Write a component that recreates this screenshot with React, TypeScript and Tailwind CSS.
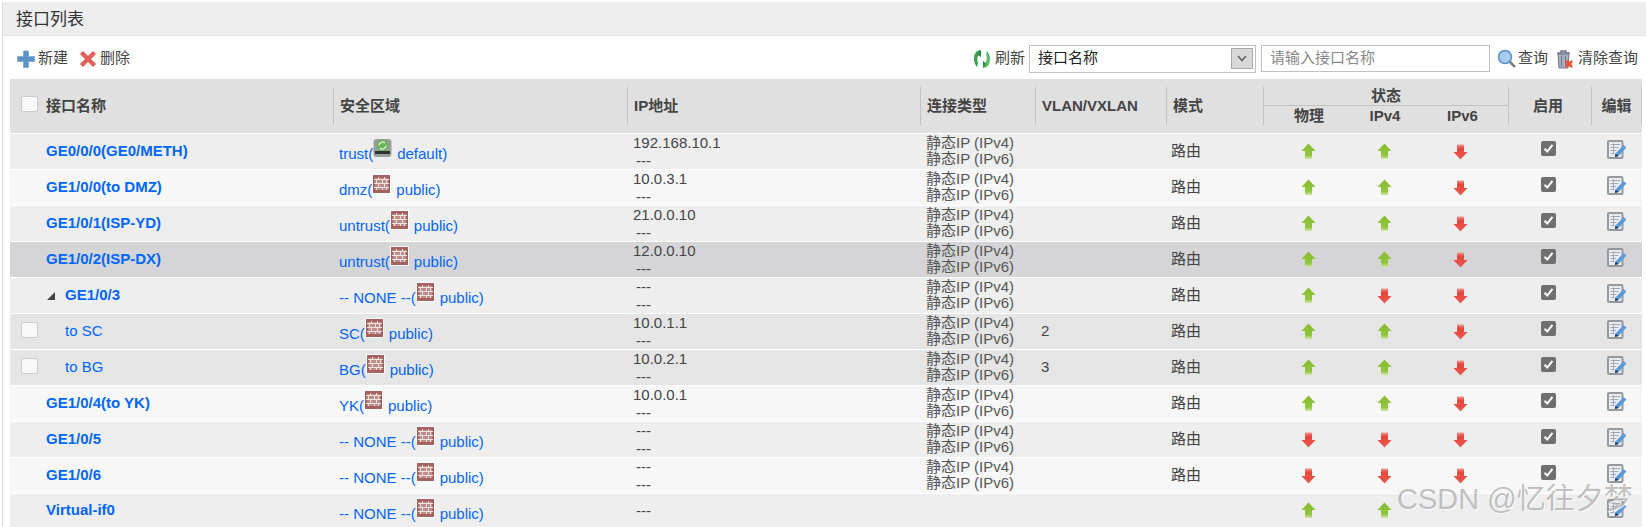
const COLS = 'grid grid-cols-[323px_294px_293px_115px_131px_97px_90px_62px_94px_82px_51px]'

type Zone = 'trust' | 'public'

interface RowDef {
  name: string
  bold?: boolean
  sub?: boolean
  tree?: boolean
  bg: string
  zone: string
  kind?: Zone
  ip: string
  ip6?: boolean
  conn?: boolean
  vlan?: string
  phys: boolean
  v4: boolean
  v6?: boolean
  last?: boolean
}

const ROWS: RowDef[] = [
  { name: 'GE0/0/0(GE0/METH)', bold: true, bg: 'bg-[#eeeeee]', zone: 'trust(', kind: 'trust', ip: '192.168.10.1', ip6: true, conn: true, phys: true, v4: true },
  { name: 'GE1/0/0(to DMZ)', bold: true, bg: 'bg-[#f7f7f7]', zone: 'dmz(', ip: '10.0.3.1', ip6: true, conn: true, phys: true, v4: true },
  { name: 'GE1/0/1(ISP-YD)', bold: true, bg: 'bg-[#eeeeee]', zone: 'untrust(', ip: '21.0.0.10', ip6: true, conn: true, phys: true, v4: true },
  { name: 'GE1/0/2(ISP-DX)', bold: true, bg: 'bg-[#d5d5d7]', zone: 'untrust(', ip: '12.0.0.10', ip6: true, conn: true, phys: true, v4: true },
  { name: 'GE1/0/3', bold: true, tree: true, bg: 'bg-[#eeeeee]', zone: '-- NONE --(', ip: '---', ip6: true, conn: true, phys: true, v4: false },
  { name: 'to SC', sub: true, bg: 'bg-[#e5e5e5]', zone: 'SC(', ip: '10.0.1.1', ip6: true, conn: true, vlan: '2', phys: true, v4: true },
  { name: 'to BG', sub: true, bg: 'bg-[#e5e5e5]', zone: 'BG(', ip: '10.0.2.1', ip6: true, conn: true, vlan: '3', phys: true, v4: true },
  { name: 'GE1/0/4(to YK)', bold: true, bg: 'bg-[#f7f7f7]', zone: 'YK(', ip: '10.0.0.1', ip6: true, conn: true, phys: true, v4: true },
  { name: 'GE1/0/5', bold: true, bg: 'bg-[#eeeeee]', zone: '-- NONE --(', ip: '---', ip6: true, conn: true, phys: false, v4: false },
  { name: 'GE1/0/6', bold: true, bg: 'bg-[#f7f7f7]', zone: '-- NONE --(', ip: '---', ip6: true, conn: true, phys: false, v4: false },
  { name: 'Virtual-if0', bold: true, bg: 'bg-[#eeeeee]', zone: '-- NONE --(', ip: '---', phys: true, v4: true, last: true },
]

function Arrow({ up }: { up: boolean }) {
  const id = up ? 'arrowUp' : 'arrowDown'
  if (up) {
    return (
      <svg width="15" height="16" viewBox="0 0 15 16" className="mb-[3px]">
        <defs>
          <linearGradient id={id} x1="0" y1="0" x2="0" y2="1">
            <stop offset="0" stopColor="#86bc2c" />
            <stop offset="0.75" stopColor="#8fc63c" />
            <stop offset="1" stopColor="#d3e8a8" />
          </linearGradient>
        </defs>
        <path d="M7.5 0.5L14.5 8H11V16H4V8H0.5Z" fill={`url(#${id})`} />
      </svg>
    )
  }
  return (
    <svg width="15" height="16" viewBox="0 0 15 16" className="mt-[-1px]">
      <defs>
        <linearGradient id={id} x1="0" y1="0" x2="0" y2="1">
          <stop offset="0" stopColor="#f0a09a" />
          <stop offset="0.25" stopColor="#e8443a" />
          <stop offset="1" stopColor="#ea5a4e" />
        </linearGradient>
      </defs>
      <path d="M4 0.5H11V8H14.5L7.5 15.5L0.5 8H4Z" fill={`url(#${id})`} />
    </svg>
  )
}

function Brick() {
  return (
    <svg width="19" height="20" viewBox="0 0 19 20" className="mt-[-7px] shrink-0">
      <rect x="0" y="0" width="19" height="20" fill="#ffffff" opacity="0.85" />
      <rect x="1" y="1" width="17" height="18" fill="#a5625e" />
      <rect x="3" y="4" width="13" height="12" fill="#c08c88" />
      <path d="M2 5.5H17M2 9.5H17M2 13.5H17" stroke="#f2e6e4" strokeWidth="1" fill="none" />
      <path d="M6.5 3V5M12.5 3V5M4.5 6V9M10.5 6V9M14.5 6V9M6.5 10V13M12.5 10V13M4.5 14V16M10.5 14V16M14.5 14V16" stroke="#efe0de" strokeWidth="1" fill="none" />
    </svg>
  )
}

function TrustIcon() {
  return (
    <svg width="19" height="20" viewBox="0 0 19 20" className="mt-[-7px] shrink-0">
      <rect x="0.5" y="1" width="18" height="18" rx="3" fill="#9a9f9b" />
      <circle cx="9.5" cy="7.5" r="6" fill="#6ab35a" />
      <path d="M6 7.5a3.5 3.5 0 0 1 6-2.4M13 7.5a3.5 3.5 0 0 1-6 2.4" stroke="#d9f0d0" strokeWidth="1.4" fill="none" />
      <rect x="2" y="13" width="15" height="3" fill="#2f3230" />
    </svg>
  )
}

function CheckedBox() {
  return (
    <svg width="15" height="15" viewBox="0 0 15 15" className="mb-[8px] mr-[4px]">
      <rect width="15" height="15" rx="2" fill="#6f6f6f" />
      <path d="M3.5 7.8L6.3 10.6L11.5 3.8" stroke="#fff" strokeWidth="2" fill="none" />
    </svg>
  )
}

function EditIcon() {
  return (
    <svg width="20" height="19" viewBox="0 0 20 19" className="mb-[6px]">
      <rect x="1" y="1" width="14.5" height="17" rx="1" fill="#e9ecf0" stroke="#9398a1" strokeWidth="2" />
      <path d="M3.5 4.5H13M3.5 7.5H11.5M3.5 10.5H9M3.5 13.5H7.5M6.5 3.5V14" stroke="#a2a9b4" strokeWidth="1" />
      <path d="M8.5 13.5L16.5 5L19.5 7.5L11.5 16L8 17Z" fill="#5b9bdc" />
      <path d="M8 17L8.5 13.8L11.5 16Z" fill="#26303d" />
    </svg>
  )
}

function EmptyBox() {
  return <span className="block h-[16px] w-[17px] rounded-[2px] border border-[#cccccc] bg-[#f8f8f8]" />
}

function Row({ row }: { row: RowDef }) {
  const nameCls = row.bold ? 'font-bold' : ''
  return (
    <div className={`${COLS} ${row.bg} mb-px h-[35px]`}>
      <div className={`relative flex items-center pb-[2px] ${row.sub || row.tree ? 'pl-[55px]' : 'pl-[36px]'}`}>
        {row.sub && (
          <span className="absolute left-[11px] top-[8px]">
            <EmptyBox />
          </span>
        )}
        {row.tree && <span className="absolute left-[37px] top-[14px] h-0 w-0 border-b-[8px] border-l-[8px] border-b-[#444444] border-l-transparent" />}
        <span className={`text-[#0066ff] ${nameCls}`}>{row.name}</span>
      </div>
      <div className="flex items-start pl-[6px] pt-[10px] leading-[19px] text-[#0066ff]">
        <span className="whitespace-pre">{row.zone}</span>
        <span className="mt-px flex shrink-0">{row.kind === 'trust' ? <TrustIcon /> : <Brick />}</span>
        <span className="ml-[5px]">{row.kind === 'trust' ? 'default)' : 'public)'}</span>
      </div>
      <div className={`flex flex-col pl-[6px] leading-[18px] text-[#444444] ${row.ip6 ? 'pt-0' : 'justify-center pb-[1px]'}`}>
        <span className={row.ip === '---' ? 'pl-[3px]' : ''}>{row.ip}</span>
        {row.ip6 && <span className="pl-[3px]">---</span>}
      </div>
      <div className="flex flex-col justify-center pb-[2px] pl-[6px] leading-[16px] text-[#555555]">
        {row.conn && (
          <>
            <span>静态IP (IPv4)</span>
            <span>静态IP (IPv6)</span>
          </>
        )}
      </div>
      <div className="flex items-center pb-[2px] pl-[6px] text-[#444444]">{row.vlan}</div>
      <div className="flex items-center pb-[1px] pl-[5px] text-[#444444]">{!row.last && '路由'}</div>
      <div className="flex items-center justify-center"><Arrow up={row.phys} /></div>
      <div className="flex items-center justify-center"><Arrow up={row.v4} /></div>
      <div className="flex items-center justify-center pr-[4px]">{!row.last && <Arrow up={!!row.v6} />}</div>
      <div className="flex items-center justify-center">{!row.last && <CheckedBox />}</div>
      <div className="flex items-center justify-center"><EditIcon /></div>
    </div>
  )
}

function HeadCell({ label, first }: { label: string; first?: boolean }) {
  return (
    <div className={`flex h-[38px] items-center pl-[6px] ${first ? '' : 'border-l border-[#c2c2c2]'}`}>{label}</div>
  )
}

export default function App() {
  return (
    <div className="relative h-[527px] w-[1646px] overflow-hidden bg-white pt-[2px] text-[15px] [font-family:'Liberation_Sans','Noto_Sans_CJK_SC',sans-serif]">
      <div className="ml-[2px] border-l border-[#dddddd]">
        {/* Title */}
        <div className="flex h-[34px] items-center border-b border-[#e6e6e6] bg-[#eeeeee] pl-[13px] pt-[2px] text-[17px] text-[#333333]">接口列表</div>

        {/* Toolbar */}
        <div className="flex h-[43px] items-center pl-[14px] pr-[8px] pt-[2px] text-[#444444]">
          <svg width="18" height="18" viewBox="0 0 18 18">
            <path d="M6.5 1H11.5V6.5H17.5V11.5H11.5V17.5H6.5V11.5H0.5V6.5H6.5Z" fill="#5b93c7" stroke="#7ea8cf" strokeWidth="0.8" />
          </svg>
          <span className="ml-[3px]">新建</span>
          <svg width="18" height="18" viewBox="0 0 18 18" className="ml-[11px]">
            <path d="M4 1L9 6L14 1L17 4L12 9L17 14L14 17L9 12L4 17L1 14L6 9L1 4Z" fill="#e2605c" stroke="#efa6a2" strokeWidth="0.8" />
          </svg>
          <span className="ml-[3px]">删除</span>

          <svg width="18" height="20" viewBox="0 0 18 20" className="ml-auto">
            <path d="M8 1C3 1 1 5 1 10C1 13 2 16 4 18L5 14C4 12 4 8 5.5 6.5L8 8Z" fill="#3f9f55" />
            <path d="M10 19C15 19 17 15 17 10C17 7 16 4 14 2L13 6C14 8 14 12 12.5 13.5L10 12Z" fill="#5dbb6e" />
            <path d="M8 1V8L5 5Z M10 19V12L13 15Z" fill="#2f8a45" />
          </svg>
          <span className="ml-[4px]">刷新</span>
          <div className="ml-[4px] flex h-[28px] w-[227px] items-center justify-between border border-[#c0c0c0] pl-[8px] pr-[2px] text-[#222222]">
            <span>接口名称</span>
            <span className="flex h-[21px] w-[22px] items-center justify-center border border-[#a8a8a8] bg-[#d8d8d8]">
              <svg width="10" height="7" viewBox="0 0 10 7">
                <path d="M1 1L5 5.5L9 1" stroke="#606060" strokeWidth="1.5" fill="none" />
              </svg>
            </span>
          </div>
          <div className="ml-[5px] flex h-[27px] w-[229px] items-center border border-[#c0c0c0] pl-[8px] text-[#888888]">请输入接口名称</div>
          <svg width="20" height="20" viewBox="0 0 20 20" className="ml-[7px]">
            <circle cx="8" cy="8" r="6.5" fill="#a8cdf0" stroke="#5a8fc8" strokeWidth="1.5" />
            <path d="M12.5 12.5L18 18" stroke="#7b8088" strokeWidth="2.5" />
          </svg>
          <span className="ml-[1px]">查询</span>
          <svg width="20" height="20" viewBox="0 0 20 20" className="ml-[7px]">
            <path d="M2 4H15M6 4V2H11V4" stroke="#6d7488" strokeWidth="1.4" fill="none" />
            <path d="M3 5H14L13 19H4Z" fill="#a9aec0" stroke="#6d7488" />
            <path d="M6.5 7V17M10.5 7V17" stroke="#6d7488" />
            <path d="M12 11L14 13L16 11L18 13L16 15L18 17L16 19L14 17L12 19L10 17L12 15L10 13Z" fill="#e8542e" />
          </svg>
          <span className="ml-[3px]">清除查询</span>
        </div>

        {/* Table */}
        <div className="ml-[7px] w-[1632px]">
          <div className={`${COLS} mb-px h-[54px] bg-[#e0e0e0] pt-[8px] font-bold text-[#444444]`}>
            <div className="relative flex h-[38px] items-center pl-[36px]">
              <span className="absolute left-[11px] top-[9px]">
                <EmptyBox />
              </span>
              接口名称
            </div>
            <HeadCell label="安全区域" />
            <HeadCell label="IP地址" />
            <HeadCell label="连接类型" />
            <HeadCell label="VLAN/VXLAN" />
            <HeadCell label="模式" />
            <div className="col-span-3 h-[38px] border-l border-r border-[#c2c2c2]">
              <div className="flex h-[19px] items-center justify-center border-b border-[#c2c2c2]">状态</div>
              <div className="grid h-[19px] grid-cols-[90px_62px_93px] text-center leading-[19px]">
                <span>物理</span>
                <span>IPv4</span>
                <span>IPv6</span>
              </div>
            </div>
            <div className="flex h-[38px] items-center justify-center pr-[4px]">启用</div>
            <div className="flex h-[38px] items-center justify-center border-l border-r border-[#c2c2c2]">编辑</div>
          </div>
          {ROWS.map(r => (
            <Row key={r.name} row={r} />
          ))}
        </div>
      </div>

      {/* Watermark */}
      <div className="pointer-events-none absolute left-[1397px] top-[478px] whitespace-nowrap text-[29px] text-[#9a9a9a]/60 [text-shadow:1px_1px_0_rgba(255,255,255,0.7)]">
        CSDN @忆往夕梦
      </div>
    </div>
  )
}
